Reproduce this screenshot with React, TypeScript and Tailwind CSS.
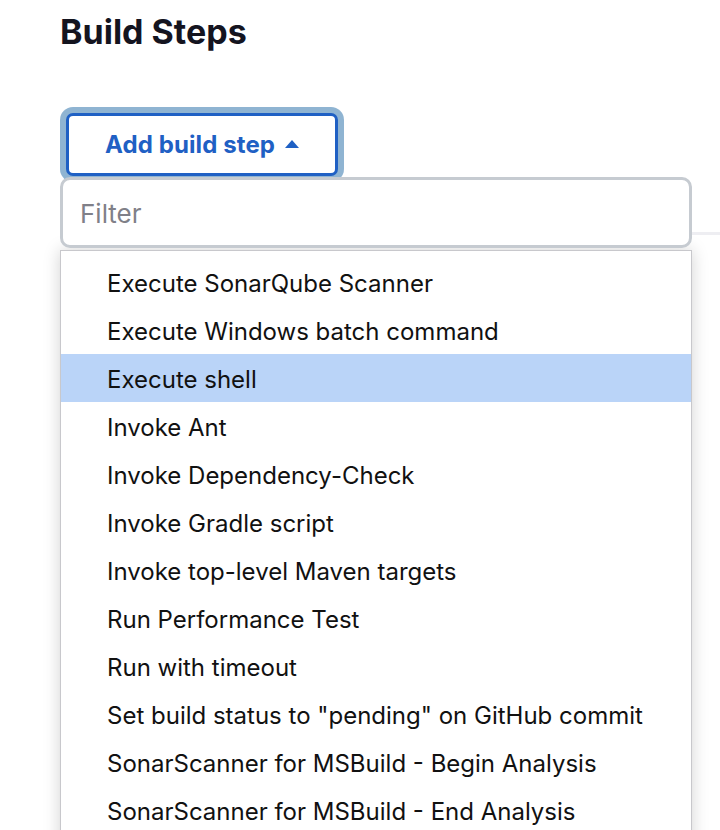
import React from "react";

const items = [
  "Execute SonarQube Scanner",
  "Execute Windows batch command",
  "Execute shell",
  "Invoke Ant",
  "Invoke Dependency-Check",
  "Invoke Gradle script",
  "Invoke top-level Maven targets",
  "Run Performance Test",
  "Run with timeout",
  'Set build status to "pending" on GitHub commit',
  "SonarScanner for MSBuild - Begin Analysis",
  "SonarScanner for MSBuild - End Analysis",
];

export default function App() {
  return (
    <div
      className="relative w-[720px] h-[830px] overflow-hidden bg-white"
      style={{ fontFamily: "Inter, 'Noto Sans', sans-serif" }}
    >
      <div className="absolute left-[692px] top-[232px] h-[3px] w-[40px] bg-[#eeeef2]" />
      <div className="pl-[60px] pt-[12px]">
        <h1 className="text-[34px] leading-[40px] font-bold text-[#14141f]">
          Build Steps
        </h1>
        <div className="mt-[61px] ml-[6px]">
          <button className="flex items-center justify-center gap-[10px] w-[272px] h-[63px] rounded-[7px] border-[3px] border-[#1f60c4] bg-white shadow-[0_0_0_6px_#8fb4d2] text-[24px] tracking-[0.1px] font-bold text-[#1f60c4]">
            <span>Add build step</span>
            <svg width="14" height="8" viewBox="0 0 14 8" className="mt-[-2px]">
              <path d="M7 0 L14 8 L0 8 Z" fill="#1f60c4" />
            </svg>
          </button>
        </div>
        <div className="relative z-10 mt-[1px] w-[632px] h-[71px] rounded-[10px] border-[3px] border-[#c6cbd1] bg-white flex items-center pl-[17px] pt-[2px] text-[26px] text-[#808088]">
          Filter
        </div>
        <div className="mt-[2px] w-[632px] h-[600px] border border-[#c8c8cc] bg-white pt-[7px] shadow-[0_0_16px_rgba(0,0,0,0.18)]">
          {items.map((it) => (
            <div
              key={it}
              className={`h-[48px] flex items-center pl-[46px] pt-[3px] text-[24px] text-[#111] ${
                it === "Execute shell" ? "bg-[#bad4f8]" : ""
              }`}
            >
              {it}
            </div>
          ))}
        </div>
      </div>
    </div>
  );
}
